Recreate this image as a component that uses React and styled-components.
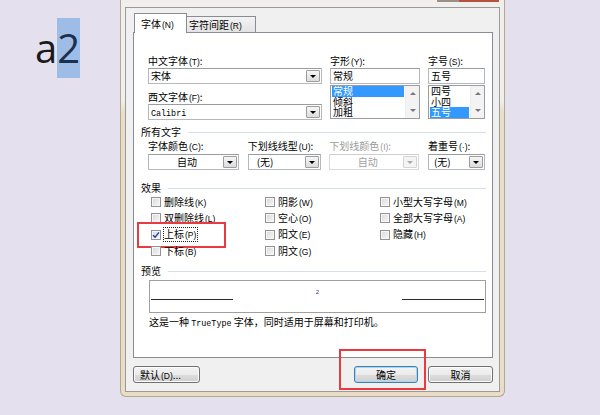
import React from 'react';
import styled, { createGlobalStyle } from 'styled-components';

const Global = createGlobalStyle`
  html, body { margin: 0; padding: 0; }
  body {
    background: #e5e0ed;
    font-family: "Noto Sans CJK SC", "Noto Sans", sans-serif;
  }
`;

const Page = styled.div`
  width: 600px;
  height: 415px;
  display: flex;
  align-items: flex-start;
  overflow: hidden;
  background: #e5e0ed;
`;

const Doc = styled.div`
  width: 120px;
  flex: none;
  box-sizing: border-box;
  padding: 18px 0 0 35px;
  font-family: "Open Sans", "Liberation Sans", sans-serif;
  font-size: 40px;
  line-height: 60px;
  color: #1a1a1a;
`;

const Hl = styled.span`
  display: inline-block;
  height: 60px;
  line-height: 60px;
  background: #9dbde6;
  color: #1c2f4d;
`;

const Dialog = styled.div`
  width: 385px;
  flex: none;
  box-sizing: border-box;
  border: 1px solid #b2a992;
  border-top: none;
  border-radius: 0 0 6px 6px;
  background: linear-gradient(#f0efeb 0, #f0efeb 100px, #e9dec5 114px, #e9dec5 100%);
  padding: 0 4px 4px 4px;
  display: flex;
  flex-direction: column;
`;

const TitleStrip = styled.div`
  height: 7px;
  display: flex;
  justify-content: flex-end;
  align-items: flex-start;
  padding-right: 1px;
`;

const CaptionBtn = styled.div`
  height: 2px;
  width: ${p => p.$w}px;
  background: ${p => (p.$close ? '#b5523f' : '#9a8f86')};
`;

const Client = styled.div`
  height: 385px;
  box-sizing: border-box;
  border: 1px solid #9a9a9a;
  background: #f0f0f0;
  padding: 5px 6px 8px 7px;
  display: flex;
  flex-direction: column;
`;

const TabRow = styled.div`
  height: 20px;
  display: flex;
  align-items: flex-end;
  padding-left: 1px;
  margin-bottom: -1px;
  position: relative;
  z-index: 1;
`;

const Tab = styled.div`
  box-sizing: border-box;
  height: ${p => (p.$active ? 20 : 17)}px;
  width: ${p => p.$w}px;
  margin-left: ${p => (p.$active ? 0 : -1)}px;
  border: 1px solid #898c95;
  border-bottom: ${p => (p.$active ? 'none' : '1px solid #898c95')};
  background: ${p => (p.$active ? '#fff' : 'linear-gradient(#f3f3f3, #e3e3e3)')};
  font-size: 10px;
  line-height: 12px;
  padding: ${p => (p.$active ? '4px 0 0 6px' : '2px 0 0 2px')};
  white-space: nowrap;
  position: relative;
  z-index: ${p => (p.$active ? 2 : 1)};
`;

const Panel = styled.div`
  width: 360px;
  height: 326px;
  box-sizing: border-box;
  border: 1px solid #898c95;
  background: #fff;
  padding: 22px 6px 0 7px;
  display: flex;
  flex-direction: column;
`;

const Mn = styled.span`
  font-family: "Liberation Sans", "Noto Sans", sans-serif;
  font-size: 8.5px;
  margin-left: 1px;
`;

const Latin = styled.span`
  font-family: "Liberation Mono", monospace;
  font-size: 8.4px;
`;

const FontGrid = styled.div`
  margin-left: 7px;
  display: grid;
  grid-template-columns: 174px 90px 57px;
  column-gap: 8px;
  align-items: start;
`;

const Col = styled.div`
  display: flex;
  flex-direction: column;
`;

const Label = styled.div`
  height: 12px;
  line-height: 12px;
  font-size: 10px;
  white-space: nowrap;
  color: ${p => (p.$disabled ? '#9a9a9a' : '#000')};
  margin-top: ${p => p.$mt || 0}px;
  margin-bottom: ${p => (p.$mb ?? 1)}px;
`;

const Combo = styled.div`
  height: 16px;
  box-sizing: border-box;
  display: flex;
  align-items: stretch;
  border: 1px solid ${p => (p.$disabled ? '#d9d9d9' : '#b5b8bf')};
  border-top-color: ${p => (p.$disabled ? '#cfcfcf' : '#9a9ca3')};
  background: #fff;
`;

const ComboValue = styled.div`
  flex: 1;
  font-size: 10px;
  line-height: 14px;
  padding-left: ${p => (p.$pad ?? 2)}px;
  text-align: ${p => (p.$center ? 'center' : 'left')};
  color: ${p => (p.$disabled ? '#a0a0a0' : '#000')};
  white-space: nowrap;
`;

const DropBtn = styled.div`
  width: 14px;
  margin: 1px 1px 1px 0;
  box-sizing: border-box;
  border: 1px solid ${p => (p.$disabled ? '#d4d4d4' : '#9d9d9d')};
  border-radius: 1px;
  background: ${p => (p.$disabled ? '#f4f4f4' : 'linear-gradient(#f6f6f6, #dcdcdc)')};
  display: flex;
  align-items: center;
  justify-content: center;
`;

const Arrow = styled.div`
  width: 0;
  height: 0;
  border-left: 3px solid transparent;
  border-right: 3px solid transparent;
  ${p => (p.$up ? 'border-bottom' : 'border-top')}: 3px solid ${p => p.$color || '#000'};
`;

const ListBox = styled.div`
  height: 34px;
  margin-top: 1px;
  box-sizing: border-box;
  border: 1px solid #9a9ca3;
  background: #fff;
  display: flex;
`;

const Items = styled.div`
  flex: 1;
  padding: 0 1px;
  display: flex;
  flex-direction: column;
`;

const Item = styled.div`
  height: 10.66px;
  line-height: 10.66px;
  font-size: 10px;
  padding-left: 1px;
  white-space: nowrap;
  background: ${p => (p.$sel ? '#3399ff' : 'transparent')};
  color: ${p => (p.$sel ? '#fff' : '#000')};
`;

const ScrollBar = styled.div`
  width: 14px;
  background: #f3f3f3;
  border-left: 1px solid #ececec;
  display: flex;
  flex-direction: column;
  align-items: center;
  justify-content: space-between;
  padding: 6px 0 6px;
  box-sizing: border-box;
`;

const Section = styled.div`
  display: flex;
  align-items: center;
  height: 12px;
  font-size: 10px;
  line-height: 12px;
  margin-top: ${p => p.$mt}px;
  &::after {
    content: '';
    flex: 1;
    height: 1px;
    background: #d5dfe5;
    margin-left: 7px;
  }
`;

const ColorGrid = styled.div`
  margin-left: 7px;
  margin-top: 2px;
  width: 337px;
  display: grid;
  grid-template-columns: 91px 73px 90px 57px;
  justify-content: space-between;
`;

const CheckGrid = styled.div`
  margin-left: 10px;
  display: grid;
  grid-template-columns: 114px 115px 1fr;
  grid-auto-rows: 16.33px;
`;

const CheckItem = styled.div`
  position: relative;
  display: flex;
  align-items: center;
  gap: 3px;
  font-size: 10px;
  line-height: 12px;
  white-space: nowrap;
`;

const Box = styled.div`
  width: 10px;
  height: 10px;
  flex: none;
  box-sizing: border-box;
  border: 1px solid #939393;
  background: linear-gradient(135deg, #d9d9d9, #f7f7f7);
  box-shadow: inset 0 0 0 1px #f6f6f6;
  display: flex;
  align-items: center;
  justify-content: center;
`;

const CheckText = styled.span`
  outline: ${p => (p.$focus ? '1px dotted #222' : 'none')};
  padding: 0 1px 0 0;
`;

const RedMark = styled.div`
  position: absolute;
  box-sizing: border-box;
  border: 2px solid #ea3a3f;
  pointer-events: none;
  left: ${p => p.$l}px;
  top: ${p => p.$t}px;
  width: ${p => p.$w}px;
  height: ${p => p.$h}px;
`;

const PreviewBox = styled.div`
  margin: 3px 0 0 8px;
  width: 337px;
  height: 33px;
  box-sizing: border-box;
  border: 1px solid #a0a0a0;
  display: flex;
  align-items: flex-start;
  padding: 0 1px;
`;

const PreviewLine = styled.div`
  width: 82px;
  height: 1px;
  background: #2a2a2a;
  margin-top: 18px;
`;

const PreviewSup = styled.div`
  flex: 1;
  text-align: center;
  font-family: "Liberation Sans", sans-serif;
  font-size: 6px;
  line-height: 6px;
  margin-top: 8px;
  color: #27408a;
`;

const Desc = styled.div`
  margin: 3px 0 0 8px;
  font-size: 10px;
  line-height: 12px;
  white-space: nowrap;
`;

const ButtonRow = styled.div`
  margin-top: 8px;
  height: 17px;
  display: flex;
  align-items: stretch;
  gap: 10px;
`;

const Spacer = styled.div`
  flex: 1;
`;

const BtnWrap = styled.div`
  position: relative;
  display: flex;
`;

const Btn = styled.div`
  width: ${p => p.$w}px;
  box-sizing: border-box;
  border: 1px solid ${p => (p.$default ? '#3c7fb1' : '#707070')};
  border-radius: 3px;
  background: linear-gradient(#f3f3f3 0%, #ebebeb 50%, #dddddd 51%, #d0d0d0 100%);
  box-shadow: ${p => (p.$default ? 'inset 0 0 0 1px #a9d6f2' : 'inset 0 0 0 1px #fcfcfc')};
  font-size: 10px;
  line-height: 15px;
  text-align: ${p => (p.$left ? 'left' : 'center')};
  padding-left: ${p => (p.$left ? 6 : 0)}px;
  white-space: nowrap;
`;

function Dropdown({ value, center, pad, disabled }) {
  return (
    <Combo $disabled={disabled}>
      <ComboValue $center={center} $pad={pad} $disabled={disabled}>{value}</ComboValue>
      <DropBtn $disabled={disabled}>
        <Arrow $color={disabled ? '#a8a8a8' : '#000'} />
      </DropBtn>
    </Combo>
  );
}

function List({ items, sel }) {
  return (
    <ListBox>
      <Items>
        {items.map(t => (
          <Item key={t} $sel={t === sel}>{t}</Item>
        ))}
      </Items>
      <ScrollBar>
        <Arrow $up $color="#777" />
        <Arrow $color="#777" />
      </ScrollBar>
    </ListBox>
  );
}

function Check({ text, mn, checked, focus, children }) {
  return (
    <CheckItem>
      <Box>
        {checked && (
          <svg width="8" height="8" viewBox="0 0 8 8">
            <path d="M1 4.2 L3.1 6.3 L7 1.4" fill="none" stroke="#1f3f96" strokeWidth="1.4" />
          </svg>
        )}
      </Box>
      <CheckText $focus={focus}>{text}<Mn>({mn})</Mn></CheckText>
      {children}
    </CheckItem>
  );
}

export default function App() {
  return (
    <>
      <Global />
      <Page>
        <Doc>a<Hl>2</Hl></Doc>
        <Dialog>
          <TitleStrip>
            <CaptionBtn $w={22} />
            <CaptionBtn $w={40} $close />
          </TitleStrip>
          <Client>
            <TabRow>
              <Tab $active $w={53}>字体<Mn>(N)</Mn></Tab>
              <Tab $w={70}>字符间距<Mn>(R)</Mn></Tab>
            </TabRow>
            <Panel>
              <FontGrid>
                <Col>
                  <Label>中文字体<Mn>(T)</Mn>:</Label>
                  <Dropdown value="宋体" />
                  <Label $mt={7}>西文字体<Mn>(F)</Mn>:</Label>
                  <Dropdown value={<Latin>Calibri</Latin>} />
                </Col>
                <Col>
                  <Label>字形<Mn>(Y)</Mn>:</Label>
                  <Combo><ComboValue>常规</ComboValue></Combo>
                  <List items={['常规', '倾斜', '加粗']} sel="常规" />
                </Col>
                <Col>
                  <Label>字号<Mn>(S)</Mn>:</Label>
                  <Combo><ComboValue>五号</ComboValue></Combo>
                  <List items={['四号', '小四', '五号']} sel="五号" />
                </Col>
              </FontGrid>

              <Section $mt={6}>所有文字</Section>
              <ColorGrid>
                <Col>
                  <Label $mb={2}>字体颜色<Mn>(C)</Mn>:</Label>
                  <Dropdown value="自动" center />
                </Col>
                <Col>
                  <Label $mb={2}>下划线线型<Mn>(U)</Mn>:</Label>
                  <Dropdown value="(无)" pad={8} />
                </Col>
                <Col>
                  <Label $mb={2} $disabled>下划线颜色<Mn>(I)</Mn>:</Label>
                  <Dropdown value="自动" center disabled />
                </Col>
                <Col>
                  <Label $mb={2}>着重号<Mn>(·)</Mn>:</Label>
                  <Dropdown value="(无)" pad={5} />
                </Col>
              </ColorGrid>

              <Section $mt={12}>效果</Section>
              <CheckGrid>
                <Check text="删除线" mn="K" />
                <Check text="阴影" mn="W" />
                <Check text="小型大写字母" mn="M" />
                <Check text="双删除线" mn="L" />
                <Check text="空心" mn="O" />
                <Check text="全部大写字母" mn="A" />
                <Check text="上标" mn="P" checked focus>
                  <RedMark $l={-14} $t={-5} $w={89} $h={26} />
                </Check>
                <Check text="阳文" mn="E" />
                <Check text="隐藏" mn="H" />
                <Check text="下标" mn="B" />
                <Check text="阴文" mn="G" />
              </CheckGrid>

              <Section $mt={6}>预览</Section>
              <PreviewBox>
                <PreviewLine />
                <PreviewSup>2</PreviewSup>
                <PreviewLine />
              </PreviewBox>
              <Desc>这是一种 <Latin>TrueType</Latin> 字体，同时适用于屏幕和打印机。</Desc>
            </Panel>
            <ButtonRow>
              <Btn $w={67} $left>默认<Mn>(D)</Mn>...</Btn>
              <Spacer />
              <BtnWrap>
                <Btn $w={64} $default>确定</Btn>
                <RedMark $l={-15} $t={-17} $w={87} $h={41} />
              </BtnWrap>
              <Btn $w={65}>取消</Btn>
            </ButtonRow>
          </Client>
        </Dialog>
      </Page>
    </>
  );
}
